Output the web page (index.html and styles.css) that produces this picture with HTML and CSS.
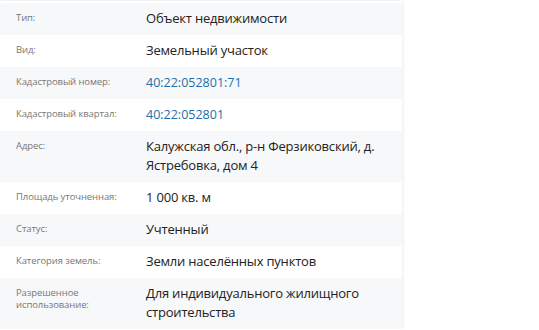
FILE: index.html
```html
<!DOCTYPE html>
<html lang="ru">
<head>
<meta charset="utf-8">
<link rel="stylesheet" href="styles.css">
</head>
<body>
<div class="card">
  <div class="row alt"><div class="label">Тип:</div><div class="value">Объект недвижимости</div></div>
  <div class="row"><div class="label">Вид:</div><div class="value">Земельный участок</div></div>
  <div class="row alt"><div class="label">Кадастровый номер:</div><div class="value"><a class="link" href="#">40:22:052801:71</a></div></div>
  <div class="row"><div class="label">Кадастровый квартал:</div><div class="value"><a class="link" href="#">40:22:052801</a></div></div>
  <div class="row alt"><div class="label">Адрес:</div><div class="value">Калужская обл., р-н Ферзиковский, д. Ястребовка, дом 4</div></div>
  <div class="row"><div class="label">Площадь уточненная:</div><div class="value">1 000 кв. м</div></div>
  <div class="row alt"><div class="label">Статус:</div><div class="value">Учтенный</div></div>
  <div class="row"><div class="label">Категория земель:</div><div class="value">Земли населённых пунктов</div></div>
  <div class="row alt"><div class="label">Разрешенное использование:</div><div class="value">Для индивидуального жилищного строительства</div></div>
</div>
</body>
</html>
```
FILE: styles.css
```css
html, body {
  margin: 0;
  padding: 0;
  background: #ffffff;
}
body {
  font-family: "Open Sans", "Noto Sans", sans-serif;
  padding-top: 1px;
}
.card {
  width: 402px;
  background: #fff;
  box-shadow: 0 0 4px rgba(0, 0, 0, 0.12);
  padding-top: 2px;
}
.row {
  display: grid;
  grid-template-columns: 130px 1fr;
  padding: 6px 16px 7px 16px;
  background: #fff;
}
.row.alt {
  background: #f7f8fa;
}
.label {
  font-size: 9.5px;
  letter-spacing: -0.1px;
  line-height: 12px;
  color: #777;
  padding-top: 3px;
  padding-right: 10px;
}
.value {
  font-size: 13px;
  letter-spacing: -0.2px;
  line-height: 19px;
  color: #222;
}
.link {
  color: #1f6ea8;
  text-decoration: none;
  font-size: 12.5px;
  letter-spacing: 0;
}
```
